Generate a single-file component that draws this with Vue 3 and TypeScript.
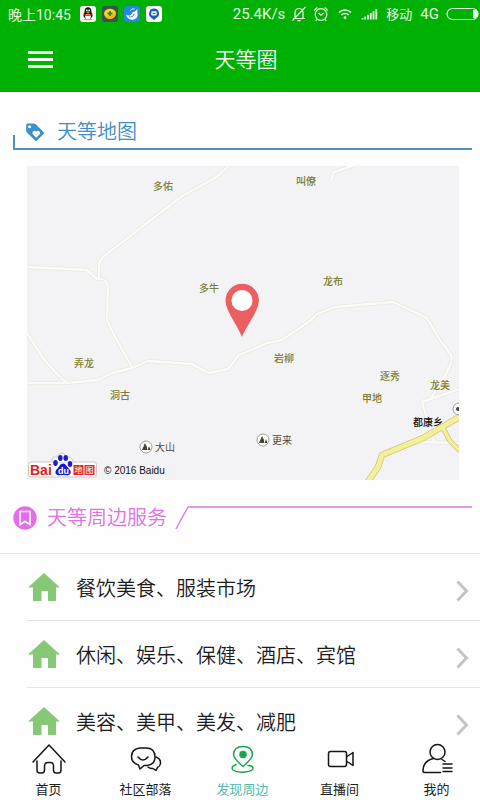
<script setup lang="ts">
interface MapLabel {
  text: string
  x: number
  y: number
}

interface Tab {
  id: string
  label: string
  active?: boolean
}

const villages: MapLabel[] = [
  { text: '多佑', x: 153, y: 190 },
  { text: '叫僚', x: 296, y: 185 },
  { text: '龙布', x: 323, y: 285 },
  { text: '多牛', x: 199, y: 292 },
  { text: '岩柳', x: 274, y: 362 },
  { text: '弄龙', x: 74, y: 367 },
  { text: '洞古', x: 110, y: 399 },
  { text: '逐秀', x: 380, y: 380 },
  { text: '甲地', x: 362, y: 402 },
  { text: '龙美', x: 430, y: 389 },
]

const hills: MapLabel[] = [
  { text: '大山', x: 146, y: 447 },
  { text: '更来', x: 263, y: 440 },
]

const roads: string[] = [
  'M230 165L215 178L182 196L103 257L99 263V278',
  'M27 267L87 270L97 279H103Q107 281 108 288L107 320L115 337L124 353L132 367',
  'M27 333L43 358Q54 372 67 383',
  'M27 383H67L98 380L112 373L132 368L148 361L192 364L208 373L228 369L239 355L267 343L282 340L310 321L317 314L335 307L393 302L427 318L440 340L451 355Q453 362 448 370L430 400',
  'M331 180L334 172L355 165',
  'M459 389L422 402L434 441',
  'M420 442L459 443',
]

const services: string[] = [
  '餐饮美食、服装市场',
  '休闲、娱乐、保健、酒店、宾馆',
  '美容、美甲、美发、减肥',
]

const tabs: Tab[] = [
  { id: 'home', label: '首页' },
  { id: 'community', label: '社区部落' },
  { id: 'nearby', label: '发现周边', active: true },
  { id: 'live', label: '直播间' },
  { id: 'mine', label: '我的' },
]
</script>

<template>
  <div class="app">
    <header class="top">
      <div class="status">
        <span class="clock">晚上10:45</span>
        <div class="notices">
          <svg viewBox="0 0 16 16" aria-hidden="true">
            <rect width="16" height="16" rx="3" fill="#fff" />
            <ellipse cx="8" cy="9" rx="4.6" ry="4.4" fill="#161616" />
            <ellipse cx="8" cy="5.2" rx="3.4" ry="4" fill="#161616" />
            <ellipse cx="8" cy="10.6" rx="2.8" ry="2.8" fill="#fff" />
            <path d="M4.4 7.4Q8 9.8 11.6 7.4L12 8.9Q8 11 4 8.9Z" fill="#d8222b" />
            <circle cx="6.8" cy="4.3" r="0.9" fill="#fff" />
            <circle cx="9.2" cy="4.3" r="0.9" fill="#fff" />
            <ellipse cx="8" cy="6.2" rx="1.8" ry="0.7" fill="#f0a020" />
            <path d="M4.5 13.6h3M8.5 13.6h3" stroke="#e29a26" stroke-width="1.4" stroke-linecap="round" />
          </svg>
          <svg viewBox="0 0 16 16" aria-hidden="true">
            <rect width="16" height="16" rx="3" fill="#3c5248" />
            <ellipse cx="8" cy="7.600" rx="6" ry="4.800" fill="#eadb25" />
            <path d="M2.500 9c3 2.500 7 1.500 11-2 .2 4-2.500 6-5.500 6s-5-1.500-5.500-4Z" fill="#f4b41d" />
            <path d="M8 5v5M5.500 7.500h5" stroke="#487d2b" stroke-width="1.800" />
          </svg>
          <svg viewBox="0 0 16 16" aria-hidden="true">
            <rect width="16" height="16" rx="3" fill="#2387e8" />
            <path
              d="M2 8.500c2 1.500 4.500 1.200 5.800-.8C8.500 6.300 9.500 5.600 11 5.500l2.500-2.500-.2 3.500c1.200 4.500-1.500 7.200-5 7.200C5 13.700 2.600 11.500 2 8.500Z"
              fill="#fff"
            />
            <path d="M5 10.700c2.500 1 4.700-.5 5.200-2.900" stroke="#2387e8" fill="none" />
            <path d="M6.500 4.500c1-1.500 2.500-1.800 4-1.500" stroke="#fff" fill="none" />
          </svg>
          <svg viewBox="0 0 16 16" aria-hidden="true">
            <rect width="16" height="16" rx="3" fill="#fff" />
            <path d="M8 2.500a5 5 0 0 1 3 9L8 14l-3-2.500a5 5 0 0 1 3-9Z" fill="#1c5fc0" />
            <rect x="5.300" y="5.200" width="5.400" height="4.400" rx="1.400" fill="#fff" />
            <path d="M6.500 7.400h3" stroke="#1c5fc0" />
          </svg>
        </div>
        <span class="speed">25.4K/s</span>
        <svg class="st-bell" viewBox="0 0 14 16" aria-hidden="true">
          <path d="M1 12.500h12M3 12V6.500a4 4 0 0 1 8 0V12M5.500 14.700h3M13.500 1L0.500 14.500" />
        </svg>
        <svg class="st-alarm" viewBox="0 0 16 16" aria-hidden="true">
          <circle cx="8" cy="8.500" r="5.800" />
          <path d="M5.500 7L8 9.300 10.700 7M1.200 4.500L4.300 1.500M14.800 4.500L11.700 1.500M4 13l-1.200 2M12 13l1.200 2" />
        </svg>
        <svg class="st-wifi" viewBox="0 0 14 12" aria-hidden="true">
          <path d="M1 4.500a8.500 8.500 0 0 1 12 0M3.200 7a5.400 5.400 0 0 1 7.600 0" />
          <circle cx="7" cy="9.700" r="1.400" />
        </svg>
        <svg class="st-signal" viewBox="0 0 17 12" aria-hidden="true">
          <path d="M1.500 11.500v-1.500M4.200 11.500V8.500M7 11.500V6.800M9.800 11.500V5M12.500 11.500V3M15.300 11.500V1" />
        </svg>
        <span class="carrier">移动</span>
        <span class="network">4G</span>
        <svg class="st-battery" viewBox="0 0 34 14" aria-hidden="true">
          <rect x="1" y="1.500" width="31" height="11" rx="5.500" />
          <path class="fill" d="M27 3v8h1.500a3.500 4 0 0 0 0-8Z" />
        </svg>
      </div>
      <div class="bar">
        <button class="menu" type="button" aria-label="菜单">
          <span></span><span></span><span></span>
        </button>
        <h1>天等圈</h1>
      </div>
    </header>

    <main>
      <section class="map-section">
        <h2 class="map-title">
          <svg viewBox="0 0 20 20" aria-hidden="true">
            <path
              fill-rule="evenodd"
              d="M2.500 1.500H9q.9 0 1.500.6l8 8q1 1 0 2L12 18.500q-1 1-2 0l-8-8Q1.200 9.800 1.200 9V3q0-1.500 1.300-1.500ZM4.600 3.200a1.500 1.500 0 1 0 0 3 1.500 1.500 0 0 0 0-3ZM11.200 9.800Q9.600 7.900 8 9.500q-1.400 1.600 0 3l3.200 3.200 3.300-3.200q1.400-1.500 0-3-1.700-1.600-3.300.3Z"
            />
          </svg>
          天等地图
        </h2>
        <svg class="map" viewBox="27 166 432 314" role="img" aria-label="天等地图">
          <rect x="27" y="166" width="432" height="314" fill="#f3f3f5" />
          <g fill="none" stroke-linejoin="round">
            <path v-for="r in roads" :key="'e' + r" :d="r" stroke="#e8e7e1" stroke-width="4" />
            <path v-for="r in roads" :key="'r' + r" :d="r" stroke="#fbfaf7" stroke-width="2.400" />
            <g stroke="#c9c48f" stroke-width="6.500">
              <path d="M443 428L450 441L460 451" stroke-width="5" />
              <path d="M367 483L378 467L382 455L423 438L461 416" />
            </g>
            <g stroke="#f5f093" stroke-width="5">
              <path d="M443 428L450 441L460 451" stroke-width="3.500" />
              <path d="M367 483L378 467L382 455L423 438L461 416" />
            </g>
          </g>
          <text v-for="v in villages" :key="v.text" class="village" :x="v.x" :y="v.y">{{ v.text }}</text>
          <g v-for="h in hills" :key="h.text">
            <circle :cx="h.x" :cy="h.y" r="6" fill="#fff" stroke="#a19f91" />
            <path :transform="`translate(${h.x} ${h.y})`" d="M-4 3L-1-4 1 0V3ZM1.500 3L3-1 4.500 3Z" fill="#45443b" />
            <text class="hill" :x="h.x + 9" :y="h.y + 4">{{ h.text }}</text>
          </g>
          <text class="town" x="413" y="426">都康乡</text>
          <circle cx="459" cy="409" r="6" fill="#fff" stroke="#a19f91" />
          <circle cx="458" cy="409" r="2" fill="#45443b" />
          <path
            fill="#eb5f61"
            d="M242 337C238 326 225.500 311 225.500 300.500a16.700 16.700 0 0 1 33.400 0C258.900 311 246 326 242 337Z"
          />
          <circle cx="242" cy="300.500" r="10.500" fill="#fff" />
          <g stroke="#c9c9c5">
            <rect x="28.500" y="462" width="68" height="15" rx="2.500" fill="#fff" />
            <path d="M52 462Q51 456 57 457Q61 449 67 457Q73 457 73 462" fill="#fff" />
          </g>
          <text class="logo-latin" x="30" y="475">Bai</text>
          <g fill="#1d1bc8">
            <ellipse cx="55.500" cy="463" rx="2.300" ry="3" />
            <ellipse cx="60.300" cy="458" rx="2.300" ry="3" />
            <ellipse cx="65.700" cy="458" rx="2.300" ry="3" />
            <ellipse cx="70" cy="464" rx="2.300" ry="3" />
            <path d="M63 463.500c3 0 4 3.500 6.200 5.500 3.500 3.500.6 7-3 6.300q-3-.5-6 0c-4.600.5-6.300-3.300-3.200-6.300 2.200-2 3-5.500 6-5.500Z" />
          </g>
          <text class="logo-du" x="58" y="474">du</text>
          <g>
            <rect x="73.500" y="465" width="10" height="10" fill="#dd272c" />
            <rect x="84.500" y="465" width="10" height="10" fill="#dd272c" />
            <text class="logo-cn" x="74.500" y="473">地</text>
            <text class="logo-cn" x="85.500" y="473">图</text>
          </g>
          <text class="copyright" x="104" y="474">© 2016 Baidu</text>
        </svg>
      </section>

      <section class="service-section">
        <h2 class="service-title">
          <svg class="bookmark" viewBox="0 0 24 24" aria-hidden="true">
            <circle cx="12" cy="12" r="11.700" fill="#e36fe8" />
            <path d="M7 5.500h10V18.500L12 15.500 7 18.500Z" fill="none" stroke="#fff" stroke-width="1.600" />
          </svg>
          <span>天等周边服务</span>
          <svg class="slash" viewBox="0 0 14 24" aria-hidden="true">
            <path d="M1 23L13 1H14" fill="none" stroke="#df82e3" stroke-width="1.500" />
          </svg>
          <i class="rule"></i>
        </h2>
        <ul class="services">
          <li v-for="s in services" :key="s">
            <a href="#">
              <svg class="house" viewBox="0 0 32 28" aria-hidden="true">
                <path d="M16 0L32 14.500H28V28H20V18H13.500V28H5V14.500H0Z" />
              </svg>
              <span class="name">{{ s }}</span>
              <svg class="chevron" viewBox="0 0 12 22" aria-hidden="true">
                <path d="M1 1.500L10 11L1 20.500" />
              </svg>
            </a>
          </li>
        </ul>
      </section>
    </main>

    <nav class="tabs">
      <a v-for="t in tabs" :key="t.id" href="#" :class="{ active: t.active }">
        <svg viewBox="0 0 36 32" aria-hidden="true">
          <g v-if="t.id === 'home'">
            <path d="M2 19L18 2L34 19" />
            <path d="M6 18V27Q6 30 9 30H11Q13.500 30 13.500 27V23Q13.500 19.500 17 19.500H19.500Q22.500 19.500 22.500 23V27Q22.500 30 25 30H27.500Q30 30 30 27V18" />
          </g>
          <g v-else-if="t.id === 'community'">
            <path d="M12 5H18Q27 5 27 14Q27 22 18 22.500H16L12 26L10.500 22Q3.500 20 3.500 13.500Q3.500 6 12 5Z" />
            <path d="M10 14Q15 20 20 14" />
            <path d="M28 14Q33 16 32.500 20.500Q32 23.500 29.500 24.500L28 27.500L25 25.500Q22 26 20 24" />
          </g>
          <g v-else-if="t.id === 'nearby'">
            <path d="M18 23.500Q9 16 8.500 11.500Q9 3.500 18 3.500Q27 3.500 27.500 11.500Q27 16 18 23.500Z" />
            <circle class="dot" cx="18" cy="11.500" r="3" />
            <path d="M11 21.500Q5 24 8 27Q12 30 20 29Q29 28 28 24.500Q27 22.500 23 22.500" />
          </g>
          <g v-else-if="t.id === 'live'">
            <rect x="6.500" y="8.500" width="18" height="15" rx="2" />
            <path d="M25 13.500L31 9.500V22.500L25 18.500" />
          </g>
          <g v-else>
            <circle cx="18.500" cy="9" r="7.500" />
            <path d="M14.500 15.500Q4 18 4 28Q4 29.500 6 29.500H21.500M23 16.500L26 18.500M24 21H33M24 25H33M24 28.500H33" />
          </g>
        </svg>
        <span>{{ t.label }}</span>
      </a>
    </nav>
  </div>
</template>

<style>
body {
  margin: 0;
  background: #fefefe;
}
</style>

<style scoped>
.app {
  display: flex;
  flex-direction: column;
  height: 100vh;
  overflow: hidden;
  background: #fefefe;
  font-family: Roboto, 'Noto Sans CJK SC', sans-serif;
  color: #1c1c1c;
}

h1,
h2,
ul {
  margin: 0;
  padding: 0;
  font-weight: 350;
}

a {
  color: inherit;
  text-decoration: none;
}

svg {
  display: block;
  flex: none;
}

.top {
  flex: none;
  background: #00b003;
  color: #e6f9e4;
}

.status {
  display: flex;
  align-items: center;
  height: 27px;
  padding: 0 0 0 8px;
  font-size: 13px;
  white-space: nowrap;
}

.clock {
  font-size: 14px;
}

.notices {
  display: flex;
  gap: 6px;
  margin-left: 9px;
}

.notices svg {
  width: 16px;
  height: 16px;
}

.speed {
  margin-left: auto;
  font-size: 15px;
}

.st-bell,
.st-alarm,
.st-wifi,
.st-signal,
.st-battery {
  fill: none;
  stroke: #e6f9e4;
  stroke-width: 1.2;
}

.st-bell {
  width: 14px;
  height: 16px;
  margin-left: 7px;
}

.st-alarm {
  width: 16px;
  height: 16px;
  margin-left: 7px;
}

.st-wifi {
  width: 14px;
  height: 12px;
  margin-left: 9px;
  stroke-width: 1.6;
}

.st-wifi circle {
  fill: #e6f9e4;
  stroke: none;
}

.st-signal {
  width: 17px;
  height: 12px;
  margin-left: 9px;
  stroke-width: 1.8;
}

.carrier {
  margin-left: 8px;
}

.network {
  margin-left: 8px;
  font-size: 15px;
}

.st-battery {
  width: 34px;
  height: 14px;
  margin-left: 7px;
}

.st-battery .fill {
  fill: #e6f9e4;
  stroke: none;
}

.bar {
  display: grid;
  grid-template-columns: 1fr auto 1fr;
  align-items: center;
  height: 65px;
  padding: 0 16px 0 28px;
}

.menu {
  display: grid;
  gap: 4px;
  justify-self: start;
  width: 25px;
  padding: 0;
  border: 0;
  background: none;
}

.menu span {
  height: 3px;
  background: #f5fff3;
}

h1 {
  font-size: 21px;
  line-height: 28px;
  color: #f5fff3;
}

main {
  flex: 1;
  min-height: 0;
  overflow: hidden auto;
  scrollbar-width: none;
}

.map-title {
  display: flex;
  align-items: center;
  gap: 12px;
  height: 32px;
  margin: 24px 8px 0 13px;
  padding-left: 12px;
  font-size: 20px;
  line-height: 32px;
  color: #3f8fc4;
  border-bottom: 2px solid #4f90b8;
  background: linear-gradient(#4f90b8, #4f90b8) left bottom / 2px 13px no-repeat;
}

.map-title svg {
  width: 20px;
  height: 20px;
  fill: #3f8fcb;
}

.map {
  width: calc(100% - 48px);
  margin: 16px 21px 0 27px;
}

.map text {
  font-family: Roboto, 'Noto Sans CJK SC', sans-serif;
}

.village {
  font-size: 10px;
  font-weight: 500;
  fill: #7d8030;
}

.hill {
  font-size: 10px;
  fill: #4c4b42;
}

.map .town {
  font-size: 10px;
  font-weight: 500;
  fill: #111;
}

.map .logo-latin {
  font-family: 'Liberation Sans', sans-serif;
  font-size: 14px;
  font-weight: 700;
  fill: #dd1f24;
}

.map .logo-du {
  font-family: 'Liberation Sans', sans-serif;
  font-size: 9px;
  font-weight: 700;
  fill: #fff;
}

.logo-cn {
  font-size: 8px;
  fill: #fff;
}

.map .copyright {
  font-family: 'Liberation Sans', sans-serif;
  font-size: 10px;
  fill: #111;
}

.service-title {
  display: flex;
  align-items: center;
  height: 24px;
  margin: 26px 8px 0 13px;
  font-size: 20px;
  line-height: 24px;
  color: #e070e4;
}

.bookmark {
  width: 24px;
  height: 24px;
  margin-right: 10px;
}

.slash {
  width: 14px;
  height: 24px;
  margin-left: 8px;
}

.rule {
  flex: 1;
  align-self: flex-start;
  height: 2px;
  background: #d99cde;
}

.services {
  margin-top: 23px;
  border-top: 1px solid #e4e4e4;
  list-style: none;
}

.services li {
  margin-left: 27px;
}

.services li + li {
  border-top: 1px solid #e4e4e2;
}

.services a {
  display: flex;
  align-items: center;
  height: 66px;
  padding-right: 11px;
}

.house {
  width: 34px;
  height: 28px;
  fill: #87c877;
}

.name {
  flex: 1;
  margin-left: 15px;
  font-size: 20px;
  font-weight: 350;
}

.chevron {
  width: 13px;
  height: 22px;
  margin-top: 8px;
  fill: none;
  stroke: #c4c4c4;
  stroke-width: 3;
}

.tabs {
  display: grid;
  grid-template-columns: repeat(5, 1fr);
  flex: none;
  width: calc(100% + 5px);
  height: 64px;
  background: #fefefe;
}

.tabs a {
  display: flex;
  flex-direction: column;
  align-items: center;
  padding-top: 7px;
  font-size: 13px;
  line-height: 18px;
  gap: 6px;
}

.tabs svg {
  width: 36px;
  height: 32px;
  fill: none;
  stroke: #151515;
  stroke-width: 1.5;
  stroke-linecap: round;
  stroke-linejoin: round;
}

.tabs .active {
  color: #54bcae;
}

.tabs .active svg {
  stroke: #1aa64b;
}

.tabs .dot {
  fill: #1aa64b;
}
</style>
